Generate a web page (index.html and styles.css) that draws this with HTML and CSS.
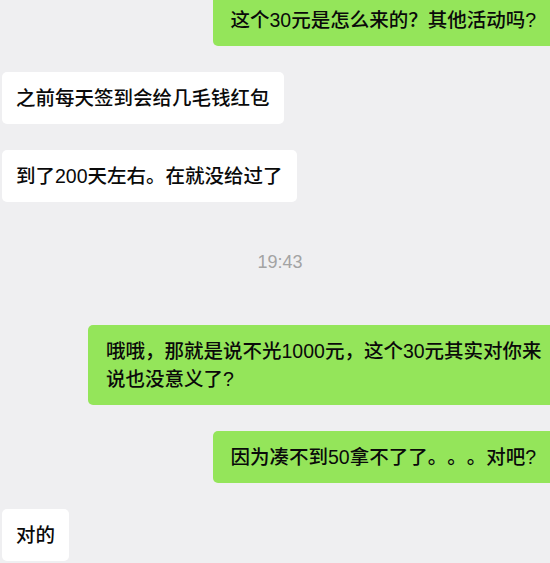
FILE: index.html
```html
<!DOCTYPE html>
<html lang="zh-CN">
<head>
<meta charset="utf-8">
<title>聊天记录</title>
<link rel="stylesheet" href="styles.css">
</head>
<body>
<div class="chat">
  <div class="msg msg-right msg-first"><div class="bubble bubble-green">这个30元是怎么来的？其他活动吗?</div></div>
  <div class="msg msg-left"><div class="bubble bubble-white">之前每天签到会给几毛钱红包</div></div>
  <div class="msg msg-left"><div class="bubble bubble-white">到了200天左右。在就没给过了</div></div>
  <div class="time">19:43</div>
  <div class="msg msg-right"><div class="bubble bubble-green bubble-wide">哦哦，那就是说不光1000元，这个30元其实对你来说也没意义了?</div></div>
  <div class="msg msg-right"><div class="bubble bubble-green">因为凑不到50拿不了了。。。对吧?</div></div>
  <div class="msg msg-left"><div class="bubble bubble-white">对的</div></div>
</div>
</body>
</html>
```

FILE: styles.css
```css
html, body {
  margin: 0;
  padding: 0;
  background: #efeff1;
  overflow: hidden;
}

body {
  width: 550px;
  height: 563px;
}

.chat {
  display: flex;
  flex-direction: column;
  gap: 26px;
  font-family: "Liberation Sans", "Noto Sans CJK SC", sans-serif;
  font-size: 19.5px;
  font-weight: 500;
  line-height: 28px;
  color: #0a0a0a;
  text-spacing-trim: space-all;
}

.msg {
  display: flex;
}

.msg-left {
  justify-content: flex-start;
  padding-left: 2px;
}

.msg-right {
  justify-content: flex-end;
  margin-right: -8px;
}

.msg-first {
  margin-top: -6px;
}

.bubble {
  border-radius: 5px;
  padding: 12px 14px;
}

.bubble-white {
  background: #ffffff;
}

.bubble-green {
  background: #94e55a;
  padding: 12px 22px 12px 17px;
}

.bubble-wide {
  width: 470px;
  box-sizing: border-box;
  padding: 12px 6px 12px 18px;
}

.time {
  text-align: center;
  font-family: "Liberation Sans", "Noto Sans", sans-serif;
  font-size: 18px;
  font-weight: 400;
  line-height: 22px;
  color: #a3a3a3;
  padding-left: 10px;
  margin: 23px 0 26px;
}
```
